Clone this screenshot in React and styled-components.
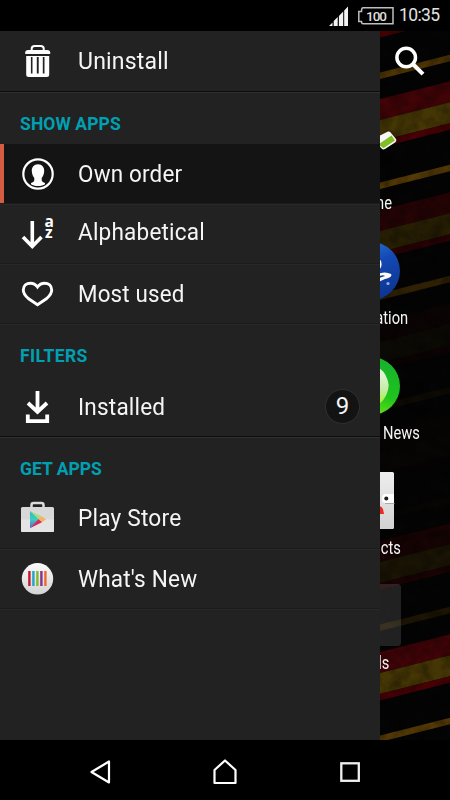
import React from "react";
import styled, { createGlobalStyle } from "styled-components";

const GlobalStyle = createGlobalStyle`
  * { box-sizing: border-box; }
  body { margin: 0; background: #000; font-family: Roboto, "Noto Sans", sans-serif; }
`;

const Screen = styled.div`
  display: grid;
  grid-template-rows: 31px 709px 60px;
  width: 450px;
  height: 800px;
  overflow: hidden;
  background: #000;
  color: #f5f5f5;
`;

const StatusBar = styled.header`
  display: flex;
  align-items: center;
  justify-content: flex-end;
  padding-right: 9px;
`;

const Clock = styled.span`
  width: 42px;
  margin-left: 5px;
  font-size: 17.5px;
  line-height: 31px;
  letter-spacing: -0.6px;
  white-space: nowrap;
  color: #e2e2e2;
`;

const Main = styled.main`
  display: grid;
  grid-template-columns: 380px 70px;
`;

const Drawer = styled.nav`
  background: #222;
`;

const SectionTitle = styled.h2`
  margin: 0;
  height: ${(p) => p.$height}px;
  padding: ${(p) => p.$top}px 0 0 20px;
  font-size: 17.5px;
  line-height: 20px;
  font-weight: 700;
  letter-spacing: ${(p) => p.$spacing || 0}px;
  color: #00a0b2;
`;

const Row = styled.div`
  display: flex;
  align-items: center;
  height: ${(p) => p.$height || 60}px;
  padding: 0 20px ${(p) => p.$lift || 0}px 20px;
  background: ${(p) => (p.$active ? "linear-gradient(90deg, #d55c43 4px, #141414 4px)" : "transparent")};
  border-bottom: 1px solid ${(p) => (p.$strong ? "#0c0c0c" : "#1b1b1b")};
  box-shadow: 0 1px 0 ${(p) => (p.$strong ? "#303030" : "#282828")};
`;

const RowIcon = styled.svg`
  flex: none;
  width: 36px;
  height: 36px;
  margin-right: 22px;
  overflow: visible;
`;

const RowLabel = styled.span`
  flex: 1;
  font-size: 23.5px;
  line-height: 30px;
  letter-spacing: 0.2px;
  white-space: nowrap;
  transform: scaleX(${(p) => p.$fit || 0.96});
  transform-origin: left;
`;

const Count = styled.span`
  display: grid;
  place-items: center;
  width: 35px;
  height: 35px;
  border: 1px solid #303030;
  border-radius: 50%;
  background: #131313;
  font-size: 24px;
  line-height: 33px;
`;

const Launcher = styled.section`
  position: relative;
  overflow: hidden;
  background: #040404;
`;

const Wallpaper = styled.svg`
  position: absolute;
  inset: 0;
`;

const AppColumn = styled.div`
  position: relative;
  display: grid;
  grid-template-rows: 90px;
  grid-auto-rows: 115px;
`;

const SearchArea = styled.div`
  padding: 14px 0 0 13px;
`;

const AppTile = styled.div`
  display: flex;
  flex-direction: column;
  align-items: flex-start;
`;

const AppIcon = styled.svg`
  display: block;
  width: 24px;
  height: 70px;
`;

const AppLabel = styled.span`
  display: flex;
  justify-content: flex-end;
  width: ${(p) => p.$end}px;
  font-size: 17.5px;
  line-height: 24px;
  white-space: nowrap;
`;

const Narrow = styled.span`
  display: block;
  flex: none;
  transform: scaleX(0.84);
  transform-origin: right;
`;

const NavBar = styled.footer`
  display: grid;
  grid-template-columns: repeat(3, 125px);
  justify-content: center;
  place-items: center;
  padding-top: 3px;
`;

const band = (y, h) => `M-2 ${y + 0.5}L72 ${y - 18.2}V${y - 18.2 + h}L-2 ${y + 0.5 + h}Z`;

const STRIPES = [
  { y: -42, glow: 0.9 },
  { y: 68, glow: 1 },
  { y: 179, glow: 0.55 },
  { y: 290, glow: 0.12 },
  { y: 400, glow: 0.05 },
  { y: 510, glow: 0.33 },
  { y: 621, glow: 1 },
];

function Backdrop() {
  return (
    <Wallpaper width="70" height="709" viewBox="0 0 70 709" aria-hidden="true">
      <defs>
        <filter id="grain" x="0" y="0" width="100%" height="100%">
          <feTurbulence type="fractalNoise" baseFrequency="0.08" numOctaves="3" />
          <feColorMatrix values="0 0 0 0 0  0 0 0 0 0  0 0 0 0 0  0 1.5 0 0 -0.5" />
        </filter>
      </defs>
      {STRIPES.map(({ y, glow }) => (
        <g key={y} opacity={glow}>
          <path d={band(y, 21)} fill="#400407" />
          <path d={band(y + 21, 21)} fill="#453605" />
          <path d={band(y + 42, 6.5)} fill="#480205" />
          <path d={band(y + 83.5, 6.5)} fill="#543a06" />
        </g>
      ))}
      <rect width="70" height="709" filter="url(#grain)" opacity="0.45" />
    </Wallpaper>
  );
}

function TrashIcon() {
  return (
    <RowIcon viewBox="0 0 36 36" fill="#fff">
      <g transform="translate(0.2 -1.6)">
        <path d="M11.500 8.500V7q0-2.500 3-2.500h6q3 0 3 2.500v1.500" fill="none" stroke="#fff" strokeWidth="2" />
        <path d="M5 11q0-2.500 3-2.500h19q3 0 3 2.500v1.500H5z" />
        <path fillRule="evenodd" d="M6 14.500h23v18.600q0 2.500-2.500 2.500h-18q-2.500 0-2.500-2.500zM10.700 15.500V32h1.600V15.500zM16.600 15.500V32h1.900V15.500zM22.600 15.500V32h1.700V15.500z" />
      </g>
    </RowIcon>
  );
}

function PersonIcon() {
  return (
    <RowIcon viewBox="0 0 36 36">
      <circle cx="18" cy="18" r="14.700" fill="none" stroke="#fff" strokeWidth="2.200" />
      <path d="M18 8.300c4.200 0 6.200 3 6.200 6.500 0 3-1 5.300-2.500 7.200v2.300c.2 1.800 1.800 2.100 3.300 2.700v1.200c-1.600 1-4 1.800-7 1.800s-5.400-.8-7-1.800V27c1.500-.6 3.100-.9 3.300-2.700V22c-1.500-1.900-2.500-4.200-2.500-7.200 0-3.500 2-6.500 6.200-6.500z" fill="#fff" />
    </RowIcon>
  );
}

function SortIcon() {
  return (
    <RowIcon viewBox="0 0 36 36">
      <path d="M12.300 7v25M3 23l9.300 9.500L21.500 23" fill="none" stroke="#fff" strokeWidth="3.600" />
      <g fill="#fff" fontFamily="Open Sans, sans-serif" fontSize="15.500" fontWeight="700">
        <text x="24.500" y="13">a</text>
        <text x="25" y="24.300">z</text>
      </g>
    </RowIcon>
  );
}

function HeartIcon() {
  return (
    <RowIcon viewBox="0 0 36 36">
      <path d="M17.500 11c-2.200-3-4.500-3.800-7-3.800-4 0-7.200 2.400-7.200 6.800 0 3.300 1.700 5.600 5 8.500l9.200 6.200 9.200-6.200c3.300-2.900 5-5.200 5-8.500 0-4.400-3.200-6.800-7.200-6.800-2.500 0-4.800.8-7 3.800z" fill="none" stroke="#fff" strokeWidth="2.900" />
    </RowIcon>
  );
}

function DownloadIcon() {
  return (
    <RowIcon viewBox="0 0 36 36" fill="none" stroke="#fff" strokeWidth="3.800">
      <path d="M17.500 2v20M8 14l9.500 9 9.500-9" />
      <path d="M7.800 25.500v6.600h19.400v-6.600" />
    </RowIcon>
  );
}

function PlayStoreIcon() {
  return (
    <RowIcon viewBox="0 0 36 36">
      <defs>
        <linearGradient id="playBlue" x1="0" y1="0" x2="0" y2="1">
          <stop offset="0" stopColor="#27b9cf" />
          <stop offset=".5" stopColor="#42cbbb" />
          <stop offset="1" stopColor="#4a67c8" />
        </linearGradient>
      </defs>
      <g transform="translate(0 -1)">
        <path d="M11.500 8V6q0-2 2-2h8q2 0 2 2v2" fill="none" stroke="#dcdcdc" strokeWidth="2.500" />
        <rect x="1" y="8" width="33" height="25" rx="1.500" fill="#d8d8d8" />
        <path d="M1 20.500h33V31.500q0 1.500-1.500 1.500h-30Q1 33 1 31.500z" fill="#e4e4e4" />
        <path d="M10 12l10 8.300-10 9z" fill="url(#playBlue)" />
        <path d="M10 12l11.500 5.300-3 3z" fill="#a7dc83" />
        <path d="M21.500 17.300l4.500 2.900-4 3-3.500-2.900z" fill="#fbae64" />
        <path d="M18.500 20.300l3.500 2.900-12 6.100z" fill="#d6285f" />
      </g>
    </RowIcon>
  );
}

const BARS = [
  ["#c01a30", 8.2],
  ["#22a3c9", 12.2],
  ["#88b92c", 16.2],
  ["#82348f", 20.2],
  ["#ec6b32", 24.2],
];

function WhatsNewIcon() {
  return (
    <RowIcon viewBox="0 0 36 36">
      <defs>
        <linearGradient id="disc" x1="0" y1="0" x2="0" y2="1">
          <stop offset="0" stopColor="#fafafa" />
          <stop offset="1" stopColor="#d4d4d4" />
        </linearGradient>
      </defs>
      <circle cx="17.500" cy="17.800" r="15.700" fill="url(#disc)" />
      {BARS.map(([fill, x]) => (
        <rect key={fill} x={x} y="10" width="2.400" height="15" fill={fill} />
      ))}
    </RowIcon>
  );
}

function PhoneArt() {
  return (
    <AppIcon viewBox="0 0 24 70">
      <path d="M-3 16L8 10.500Q10 10 11 12L16 18Q17 20 15 21.500L5 28Q3 29 1.500 27.500L-4 21z" fill="#f6f6f6" />
      <path d="M-2 23.500L11.500 14.500L15 19.500L4.500 26.500Q3 27.500 2 26z" fill="#82bf25" />
    </AppIcon>
  );
}

function PlayStationArt() {
  return (
    <AppIcon viewBox="0 0 24 70">
      <defs>
        <linearGradient id="psBlue" x1="0" y1="0" x2=".4" y2="1">
          <stop offset="0" stopColor="#2f7ddb" />
          <stop offset=".5" stopColor="#1449b4" />
          <stop offset="1" stopColor="#0d3795" />
        </linearGradient>
      </defs>
      <circle cx="-9" cy="35" r="29" fill="url(#psBlue)" />
      <path d="M-2 22Q2 24 1.500 29T-2 33z" fill="#fff" />
      <path d="M-2 38Q5 35 11 38Q13 41 5 43L-2 46v-3.500L5 40Q3 38.500-2 40.500z" fill="#fff" />
      <circle cx="8" cy="47.500" r="1.600" fill="#8fb0e6" />
    </AppIcon>
  );
}

function NewsArt() {
  return (
    <AppIcon viewBox="0 0 24 70">
      <defs>
        <linearGradient id="ring" x1="0" y1="1" x2="0.300" y2="0">
          <stop offset="0" stopColor="#86ec16" />
          <stop offset=".5" stopColor="#1fc51c" />
          <stop offset="1" stopColor="#18b42c" />
        </linearGradient>
        <linearGradient id="leaf" x1="0" y1="0" x2="0" y2="1">
          <stop offset="0" stopColor="#f3f8ef" />
          <stop offset=".6" stopColor="#c4eca8" />
          <stop offset="1" stopColor="#a8ef22" />
        </linearGradient>
      </defs>
      <circle cx="-9" cy="35" r="29" fill="url(#ring)" />
      <path d="M-10 14Q6 16 8.700 34Q8 48-4 55z" fill="url(#leaf)" />
    </AppIcon>
  );
}

function ContactsArt() {
  return (
    <AppIcon viewBox="0 0 24 70">
      <defs>
        <linearGradient id="book" x1="0" y1="0" x2="0" y2="1">
          <stop offset="0" stopColor="#eee" />
          <stop offset="1" stopColor="#d2d2d2" />
        </linearGradient>
      </defs>
      <rect x="-10" y="6" width="24" height="57" rx="1.500" fill="url(#book)" />
      <path d="M-4 48V42Q0 38 3 43l1 5z" fill="#e62b20" />
      <path d="M14 28H5.500Q2 28 2 32.500T5.500 37H14z" fill="#fff" />
      <path d="M14.500 37.500H5" stroke="#aaa" strokeWidth="1" />
      <circle cx="6.300" cy="32.500" r="2" fill="#1e1e1e" />
    </AppIcon>
  );
}

function FolderArt() {
  return (
    <AppIcon viewBox="0 0 24 70">
      <rect x="-10" y="3" width="31" height="62" rx="3.500" fill="#fff" fillOpacity=".12" />
    </AppIcon>
  );
}

const APPS = [
  { label: "ne", end: 12, Art: PhoneArt },
  { label: "ation", end: 28, Art: PlayStationArt },
  { label: "News", end: 40, Art: NewsArt },
  { label: "cts", end: 20.5, Art: ContactsArt },
  { label: "ls", end: 9.5, Art: FolderArt },
];

export default function App() {
  return (
    <Screen>
      <GlobalStyle />
      <StatusBar>
        <svg width="66" height="31" viewBox="328 0 66 31">
          <path d="M329 26l3.500-3.500V26zM333.700 26v-5l4-4V26zM338.900 26V16l4.300-4.500v14.500zM344.200 26V10.500l3.800-4V26z" fill="#f2f2f2" />
          <path d="M363 7.800h30v16h-30c-1.300 0-1.500-.8-1.500-2.300h-2.700v-10h2.700c0-2.500.2-3.700 1.500-3.700z" fill="none" stroke="#bfbfbf" strokeWidth="1.500" />
          <text x="366" y="20.800" fontFamily="Roboto, sans-serif" fontSize="13.500" fontWeight="500" textLength="21" lengthAdjust="spacing" fill="#dedede">100</text>
        </svg>
        <Clock>10:35</Clock>
      </StatusBar>
      <Main>
        <Drawer>
          <Row $height={61} $strong><TrashIcon /><RowLabel $fit={0.98}>Uninstall</RowLabel></Row>
          <SectionTitle $height={52} $top={22} $spacing={0.1}>SHOW APPS</SectionTitle>
          <Row $active><PersonIcon /><RowLabel $fit={0.955}>Own order</RowLabel></Row>
          <Row $lift={3}><SortIcon /><RowLabel>Alphabetical</RowLabel></Row>
          <Row><HeartIcon /><RowLabel $fit={0.95}>Most used</RowLabel></Row>
          <SectionTitle $height={53} $top={22} $spacing={0.4}>FILTERS</SectionTitle>
          <Row $strong><DownloadIcon /><RowLabel>Installed</RowLabel><Count>9</Count></Row>
          <SectionTitle $height={50} $top={22}>GET APPS</SectionTitle>
          <Row $height={62}><PlayStoreIcon /><RowLabel $fit={0.965}>Play Store</RowLabel></Row>
          <Row><WhatsNewIcon /><RowLabel>What's New</RowLabel></Row>
        </Drawer>
        <Launcher>
          <Backdrop />
          <AppColumn>
            <SearchArea>
              <svg width="36" height="36" viewBox="393 45 36 36" fill="none" stroke="#fff">
                <circle cx="406.200" cy="57.500" r="9.300" strokeWidth="3.500" />
                <path d="M413.300 64.500l9.700 9.700" strokeWidth="4" />
              </svg>
            </SearchArea>
            {APPS.map(({ label, end, Art }) => (
              <AppTile key={label}>
                <Art />
                <AppLabel $end={end}><Narrow>{label}</Narrow></AppLabel>
              </AppTile>
            ))}
          </AppColumn>
        </Launcher>
      </Main>
      <NavBar>
        <svg width="28" height="28" viewBox="86 758 28 28" fill="none" stroke="#fff" strokeWidth="2.200">
          <path d="M109 761.500v21L91.500 772z" strokeLinejoin="round" />
        </svg>
        <svg width="28" height="28" viewBox="211 758 28 28" fill="none" stroke="#fff" strokeWidth="2.200">
          <path d="M225 760.500L235.500 770v13h-21v-13z" strokeLinejoin="round" />
        </svg>
        <svg width="28" height="28" viewBox="336 758 28 28" fill="none" stroke="#f0f0f0" strokeWidth="2.300">
          <rect x="341.300" y="763.300" width="17.500" height="17.500" />
        </svg>
      </NavBar>
    </Screen>
  );
}
